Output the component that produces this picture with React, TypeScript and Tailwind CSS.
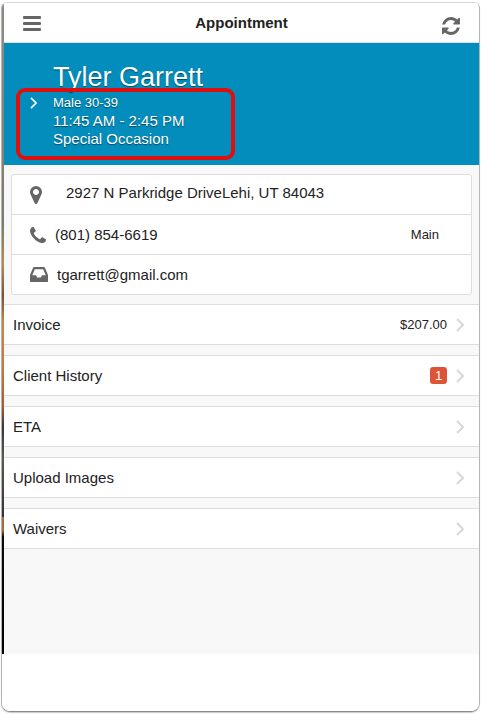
import type { ReactNode } from "react";

type IconProps = { path: string; viewBox: string; className: string };

function Icon({ path, viewBox, className }: IconProps) {
  return (
    <svg viewBox={viewBox} className={className} fill="currentColor" aria-hidden="true">
      <path d={path} />
    </svg>
  );
}

const REFRESH =
  "M1639 1056q0 5-1 7-64 268-268 434.5t-478 166.5q-146 0-282.5-55t-243.5-157l-129 129q-19 19-45 19t-45-19-19-45v-448q0-26 19-45t45-19h448q26 0 45 19t19 45-19 45l-137 137q71 66 161 102t187 36q134 0 250-65t186-179q11-17 53-117 8-23 30-23h192q13 0 22.5 9.5t9.5 22.5zm25-800v448q0 26-19 45t-45 19h-448q-26 0-45-19t-19-45 19-45l138-138q-148-137-349-137-134 0-250 65t-186 179q-11 17-53 117-8 23-30 23h-199q-13 0-22.5-9.5t-9.5-22.5v-7q65-268 270-434.5t480-166.5q146 0 284 55.5t245 156.5l130-129q19-19 45-19t45 19 19 45z";
const MARKER =
  "M1152 640q0-106-75-181t-181-75-181 75-75 181 75 181 181 75 181-75 75-181zm256 0q0 109-33 179l-364 774q-16 33-47.5 52t-67.5 19-67.5-19-46.5-52l-365-774q-33-70-33-179 0-212 150-362t362-150 362 150 150 362z";
const PHONE =
  "M1600 1240q0 27-10 70.5t-21 68.5q-21 50-122 106-94 51-186 51-27 0-52.5-3.5t-57.5-12.5-47.5-14.5-55.5-20.5-49-18q-98-35-175-83-128-79-264.5-215.5t-215.5-264.5q-48-77-83-175-3-9-18-49t-20.5-55.5-14.5-47.5-12.5-57.5-3.5-52.5q0-92 51-186 56-101 106-122 25-11 68.5-21t70.5-10q14 0 21 3 18 6 53 76 11 19 30 54t35 63.5 31 53.5q3 4 17.5 25t21.5 35.5 7 28.5q0 20-28.5 50t-62 55-62 53-28.5 46q0 9 5 22.5t8.5 20.5 14 24 11.5 19q76 137 174 235t235 174q2 1 19 11.5t24 14 20.5 8.5 22.5 5q18 0 46-28.5t53-62 55-62 50-28.5q14 0 28.5 7t35.5 21.5 25 17.5q25 15 53.5 31t63.5 35 54 30q70 35 76 53 3 7 3 21z";
const INBOX =
  "M1151 960h316q-1-3-2.5-8t-2.5-8l-212-496h-708l-212 496q-1 2-2.5 8t-2.5 8h316l95 192h320zm513 30v482q0 26-19 45t-45 19h-1408q-26 0-45-19t-19-45v-482q0-62 25-123l238-552q10-25 36.5-42t52.5-17h832q26 0 52.5 17t36.5 42l238 552q25 61 25 123z";
const BARS =
  "M1 0h16q1 0 1 1v1q0 1-1 1h-16q-1 0-1-1v-1q0-1 1-1zM1 6h16q1 0 1 1v1q0 1-1 1h-16q-1 0-1-1v-1q0-1 1-1zM1 12h16q1 0 1 1v1q0 1-1 1h-16q-1 0-1-1v-1q0-1 1-1z";

function Chevron({ className }: { className: string }) {
  return (
    <svg viewBox="0 0 8 14" className={className} fill="none" stroke="currentColor" strokeWidth="2" aria-hidden="true">
      <path d="M1 1l6 6-6 6" />
    </svg>
  );
}

function MenuRow({ label, children }: { label: string; children?: ReactNode }) {
  return (
    <a href="#" className="flex h-[41px] items-center border-y border-[#dddddd] bg-white pr-[15px] pl-[9px]">
      <span className="flex-1">{label}</span>
      {children}
      <Chevron className="ml-[9px] h-[14px] w-2 text-[#d8d8d8]" />
    </a>
  );
}

export default function App() {
  return (
    <div className="flex min-h-screen flex-col bg-white px-px pt-[2px] pb-[2px] font-['Liberation_Sans',Arial,sans-serif] text-[15px] leading-[18px] text-[#222222]">
      <div className="flex flex-1 flex-col overflow-hidden rounded-t-md rounded-b-[9px] border border-t-[#d8d8d8] border-r-[#b5b5b5] border-b-[#8a8a8a] border-l-[#b5b5b5] bg-white shadow-[0_1px_1px_#c8c8c8]">
        <div className="flex flex-1">
          <div className="w-[2px] bg-[linear-gradient(180deg,#8c8c86_0%,#85806f_25%,#7c7c68_34%,#c08a4a_40%,#7a5234_45%,#c98745_49%,#c07a3c_56%,#a85e30_62%,#383838_65%,#5a5a52_70%,#333333_79%,#a86840_79%,#a86840_81%,#0c0c0c_82%,#000000_100%)]" />
          <div className="flex min-w-0 flex-1 flex-col bg-[#f8f8f8]">
            <header className="flex h-10 items-center justify-between border-b border-[#dddddd] bg-white px-[19px]">
              <button type="button" aria-label="Menu" className="pt-[2px] text-[#666666]">
                <Icon path={BARS} viewBox="0 0 18 15" className="h-[15px] w-[18px]" />
              </button>
              <h1 className="font-bold">Appointment</h1>
              <button type="button" aria-label="Refresh" className="pt-[6px] text-[#666666]">
                <Icon path={REFRESH} viewBox="128 128 1536 1536" className="h-[18px] w-[18px]" />
              </button>
            </header>

            <section className="relative flex h-[122px] gap-4 bg-[#028dbc] pt-[18px] pl-[26px] text-white [text-shadow:0_1px_1px_rgba(0,0,0,0.5)]">
              <button type="button" aria-label="Expand" className="mt-[36px] h-3">
                <Chevron className="h-3 w-[7px]" />
              </button>
              <div>
                <h2 className="text-[27px] leading-[33px]">Tyler Garrett</h2>
                <p className="text-[13px]">Male 30-39</p>
                <p>11:45 AM - 2:45 PM</p>
                <p>Special Occasion</p>
              </div>
              <div className="absolute top-[45px] left-3 h-[72px] w-[219px] rounded-[9px] border-4 border-[#e00f0f]" />
            </section>

            <ul className="mx-[7px] my-[9px] divide-y divide-[#dddddd] rounded-[3px] border border-[#dddddd] bg-white">
              <li className="flex h-10 items-center pl-[18px]">
                <Icon path={MARKER} viewBox="384 128 1024 1536" className="h-[18px] w-3 text-[#666666]" />
                <a href="#" className="pb-1 pl-6">2927 N Parkridge DriveLehi, UT 84043</a>
              </li>
              <li className="flex h-10 items-center pr-8 pl-[18px]">
                <Icon path={PHONE} viewBox="192 128 1408 1408" className="h-4 w-4 text-[#666666]" />
                <a href="#" className="flex-1 pl-[9px]">(801) 854-6619</a>
                <span className="text-[13px]">Main</span>
              </li>
              <li className="flex h-[39px] items-center pl-[18px]">
                <Icon path={INBOX} viewBox="128 256 1536 1280" className="h-[15px] w-[18px] text-[#666666]" />
                <a href="#" className="pl-[9px]">tgarrett@gmail.com</a>
              </li>
            </ul>

            <nav className="flex flex-col gap-[10px]">
              <MenuRow label="Invoice">
                <span className="text-[13px]">$207.00</span>
              </MenuRow>
              <MenuRow label="Client History">
                <span className="flex h-[17px] w-[17px] items-center justify-center rounded-[3px] bg-[#dd5436] text-[13px] text-white">1</span>
              </MenuRow>
              <MenuRow label="ETA" />
              <MenuRow label="Upload Images" />
              <MenuRow label="Waivers" />
            </nav>
          </div>
        </div>
        <footer className="h-[57px] bg-white" />
      </div>
    </div>
  );
}
